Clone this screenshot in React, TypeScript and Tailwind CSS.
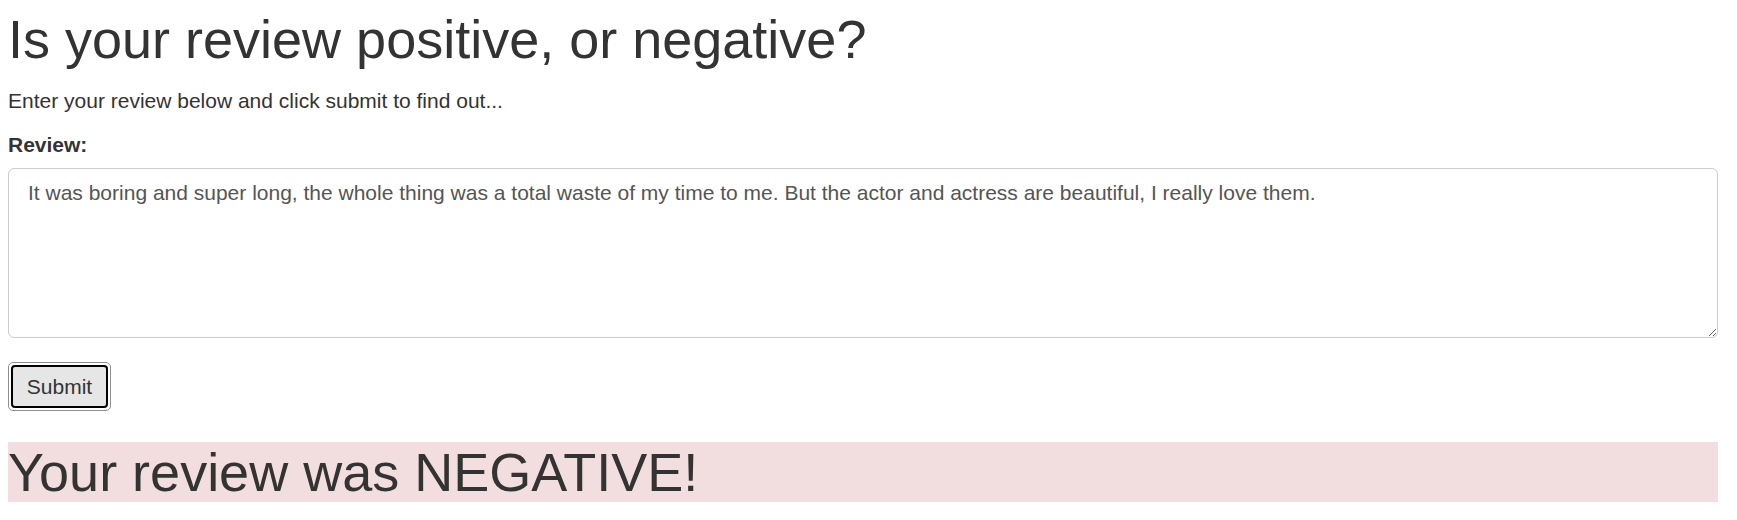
import React from "react";

export default function App() {
  return (
    <div
      className="w-[1737px] h-[520px] bg-white text-[#333333] overflow-hidden"
      style={{ fontFamily: '"Liberation Sans", Arial, sans-serif' }}
    >
      <div className="pl-2 w-[1718px]">
        <h1 className="text-[54px] leading-[1.1] font-normal pt-[10px]">
          Is your review positive, or negative?
        </h1>
        <p className="text-[21px] leading-[30px] mt-[17px]">
          Enter your review below and click submit to find out...
        </p>
        <form onSubmit={(e) => e.preventDefault()}>
          <label className="block text-[21px] leading-[30px] font-bold mt-[14px]">
            Review:
          </label>
          <textarea
            className="block w-full h-[170px] mt-[8px] border border-[#cccccc] rounded-[6px] px-[19px] py-[9px] text-[21px] leading-[30px] text-[#555555] resize-y outline-none"
            defaultValue="It was boring and super long, the whole thing was a total waste of my time to me. But the actor and actress are beautiful, I really love them."
          />
          <button
            type="submit"
            className="block mt-[24px] w-[103px] h-[49px] rounded-[5px] border border-[#8f8f8f] p-[2px] bg-white"
          >
            <span className="flex items-center justify-center w-full h-full rounded-[4px] border-2 border-black bg-[#e6e6e6] text-[21px] text-[#333333]">
              Submit
            </span>
          </button>
        </form>
        <h1 className="mt-[31px] bg-[#f2dede] text-[54px] leading-[60px] font-normal">
          Your review was NEGATIVE!
        </h1>
      </div>
    </div>
  );
}
